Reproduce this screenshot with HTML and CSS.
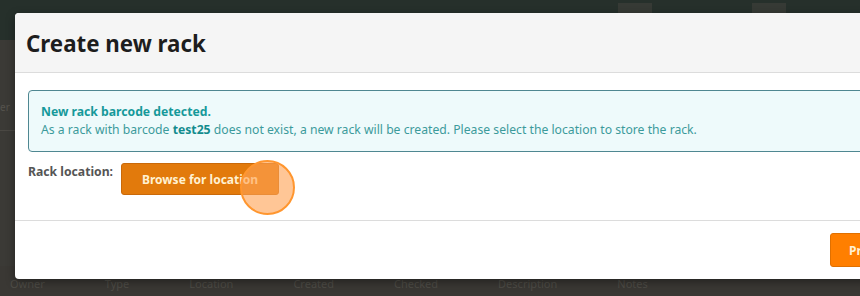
FILE: index.html
```html
<!DOCTYPE html>
<html>
<head>
<meta charset="utf-8">
<link rel="stylesheet" href="styles.css">
</head>
<body>
<div class="page">
  <div class="navbar">
    <span class="nav-item">System Admin</span>
    <span class="nav-avatar"></span>
    <span class="nav-item">My Account</span>
    <span class="nav-avatar"></span>
    <span class="nav-item">Sign out</span>
  </div>
  <div class="content">
    <div class="side-tab">er</div>
  </div>
  <div class="table-head">
    <span>Owner</span><span>Type</span><span>Location</span><span>Created</span><span>Checked</span><span>Description</span><span>Notes</span>
  </div>
</div>

<div class="modal">
  <div class="modal-header">
    <h2 class="modal-title">Create new rack</h2>
  </div>
  <div class="modal-body">
    <div class="alert">
      <div class="alert-title">New rack barcode detected.</div>
      <div class="alert-text">As a rack with barcode <b>test25</b> does not exist, a new rack will be created. Please select the location to store the rack.</div>
    </div>
    <div class="location-row">
      <span class="location-label">Rack location:</span>
      <button class="btn btn-browse">Browse for location<span class="click-marker"></span></button>
    </div>
  </div>
  <div class="modal-footer">
    <button class="btn btn-proceed">Proceed</button>
  </div>
</div>
</body>
</html>
```

FILE: styles.css
```css
html, body {
  margin: 0;
  padding: 0;
  width: 860px;
  height: 296px;
  overflow: hidden;
  background: #3a3935;
  font-family: "Noto Sans", "Open Sans", sans-serif;
}

.page {
  display: flex;
  flex-direction: column;
  height: 296px;
}

.navbar {
  height: 40px;
  background: #26302b;
  display: flex;
  align-items: center;
  justify-content: flex-end;
  gap: 14px;
  padding-right: 10px;
  color: #3c4640;
  font-size: 13px;
}

.nav-avatar {
  width: 34px;
  height: 34px;
  background: #363a35;
}

.content {
  flex: 1;
  background: #3b3a36;
}

.side-tab {
  color: #55534d;
  font-size: 10px;
  padding: 60px 0 0 0;
  width: 15px;
  border-bottom: 1px solid #4a4843;
  height: 30px;
}

.table-head {
  height: 20px;
  background: #3a3834;
  display: flex;
  gap: 60px;
  padding: 10px 0 0 10px;
  color: #4f4d47;
  font-size: 11px;
}

.modal {
  position: absolute;
  left: 15px;
  top: 13px;
  width: 900px;
  height: 266px;
  background: #fff;
  border-radius: 4px;
  box-shadow: 0 3px 10px rgba(0, 0, 0, 0.4);
  display: flex;
  flex-direction: column;
  overflow: hidden;
}

.modal-header {
  height: 60px;
  flex: none;
  background: #f5f5f5;
  border-bottom: 1px solid #dcdcdc;
  display: flex;
  align-items: center;
  padding: 2px 0 0 11px;
  box-sizing: border-box;
}

.modal-title {
  margin: 0;
  font-size: 22.3px;
  font-weight: 700;
  color: #1d1d1d;
}

.modal-body {
  flex: none;
  padding: 17px 13px 25px;
  border-bottom: 1px solid #dcdcdc;
}

.alert {
  border: 1px solid #4f8791;
  border-radius: 4px;
  background: #eefafb;
  padding: 12px 12px;
  font-size: 12.2px;
  line-height: 18px;
  color: #3c9a9b;
}

.alert-title {
  font-weight: 700;
  color: #16999a;
}

.alert-text b {
  color: #138c8e;
}

.location-row {
  display: flex;
  align-items: flex-start;
  gap: 8px;
  margin-top: 11px;
}

.location-label {
  font-size: 12.2px;
  font-weight: 700;
  color: #555;
  line-height: 18px;
}

.btn {
  font-family: inherit;
  font-size: 12px;
  font-weight: 700;
  border-radius: 3px;
  cursor: pointer;
}

.btn-browse {
  position: relative;
  height: 32px;
  width: 158px;
  background: #e27a0c;
  border: 1px solid #c9690a;
  color: #fff1d2;
  padding: 0 10px;
}

.click-marker {
  position: absolute;
  left: 118px;
  top: -4px;
  width: 51px;
  height: 51px;
  border-radius: 50%;
  border: 2px solid #ff962f;
  background: rgba(255, 163, 86, 0.62);
}

.modal-footer {
  flex: 1;
  display: flex;
  align-items: flex-start;
  padding: 12px 0 0 815px;
}

.btn-proceed {
  height: 34px;
  background: #ff7f00;
  border: 1px solid #e07000;
  color: #fff1d2;
  padding: 0 18px;
}
```
